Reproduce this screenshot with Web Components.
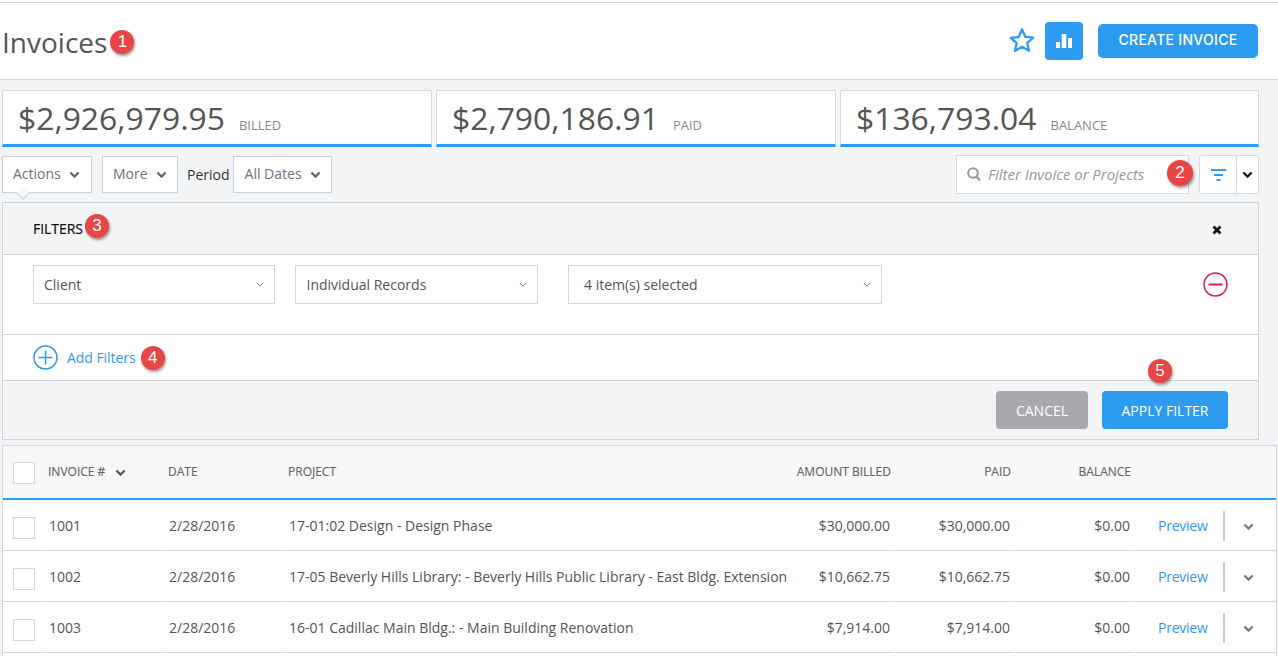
<!DOCTYPE html>
<html lang="en"><head><meta charset="utf-8"><title>Invoices</title>
<style>
html,body{margin:0;padding:0;height:656px;overflow:hidden;background:#f3f4f6;font-family:"Open Sans",sans-serif;font-size:14px;color:#555}
</style></head><body>
<inv-header></inv-header>
<inv-stats></inv-stats>
<inv-toolbar></inv-toolbar>
<filter-panel></filter-panel>
<inv-table></inv-table>
<script>
const chev=(w,h,c,sw)=>`<svg width="${w}" height="${h}" viewBox="0 0 ${w} ${h}" style="display:block;flex:none"><path d="M${sw/2+.3} ${sw/2+.3}L${w/2} ${h-sw/2-.3}L${w-sw/2-.3} ${sw/2+.3}" fill="none" stroke="${c}" stroke-width="${sw}"/></svg>`;
function def(name,css,html){
  customElements.define(name,class extends HTMLElement{
    constructor(){super();const s=this.attachShadow({mode:'open'});
      s.innerHTML=`<style>${css}</style>`+(typeof html==='function'?html(this):html);}
  });
}
def('num-badge',`:host{display:inline-flex;align-items:center;justify-content:center;width:24px;height:24px;border-radius:50%;background:#e84545;color:#fff;font:17px/24px "Liberation Sans",sans-serif;box-shadow:1px 2px 3px rgba(0,0,0,.4);flex:none}`,`<slot></slot>`);

def('inv-header',`
:host{display:block;background:#fff;padding-top:2px}
.bar{display:flex;align-items:center;height:76px;border-top:1px solid #d3d9e1;border-bottom:1px solid #d3d9e1;padding:0 20px 0 2px}
h1{margin:0;font:400 28px/38px "Open Sans",sans-serif;color:#555;margin-top:1px}
num-badge{margin-left:3px;margin-top:2px}
.r{margin-left:auto;display:flex;align-items:center}
.star{display:block;margin-top:-2px}
.chart{width:38px;height:38px;margin-left:10px;background:#2d9bf0;border-radius:4px;display:flex;align-items:center;justify-content:center;margin-top:-1px}
.create{margin-left:15px;width:160px;height:34px;box-sizing:border-box;padding-bottom:2px;background:#2d9bf0;border-radius:5px;color:#fff;display:flex;align-items:center;justify-content:center;font:500 14px/30px Inter,sans-serif;letter-spacing:.3px}
`,`<div class="bar"><h1>Invoices</h1><num-badge>1</num-badge>
<div class="r">
<svg class="star" width="26" height="26" viewBox="0 0 26 26"><path d="M13 2.300l3.300 7.500 7.900.8-5.900 5.300 1.700 7.800L13 19.800l-7 4.100 1.700-7.800-5.900-5.300 7.900-.8z" fill="none" stroke="#2d9bf0" stroke-width="2.300" stroke-linejoin="round"/></svg>
<div class="chart"><svg width="16" height="14" viewBox="0 0 16 14"><path d="M0 8h4v6H0zM5.700 0h4.600v14H5.700zM12 4h4v10h-4z" fill="#fff"/></svg></div>
<div class="create">CREATE INVOICE</div>
</div></div>`);

def('stat-card',`
:host{display:flex;align-items:baseline;box-sizing:border-box;height:57px;background:#fff;border:1px solid #d3d9e1;border-bottom:3px solid #2d9bf0;padding:0 0 0 15px}
.n{font:400 31.850px/53px "Open Sans",sans-serif;color:#555}
.l{font:400 13px/16px "Open Sans",sans-serif;color:#888;margin-left:14px}
`,h=>`<span class="n">${h.getAttribute('value')}</span><span class="l">${h.getAttribute('label')}</span>`);

def('inv-stats',`
:host{display:flex;gap:4px;padding:0 19px 0 2px;margin-top:10px}
stat-card:nth-of-type(1){width:430px}
stat-card:nth-of-type(2){width:400px}
stat-card:nth-of-type(3){flex:1}
`,`<stat-card value="$2,926,979.95" label="BILLED"></stat-card><stat-card value="$2,790,186.91" label="PAID"></stat-card><stat-card value="$136,793.04" label="BALANCE"></stat-card>`);

def('drop-btn',`
:host{display:inline-flex;align-items:center;box-sizing:border-box;height:37px;background:#fff;border:1px solid #c5d3de;padding-left:10px;color:#6b7280;position:relative;line-height:34px}
span{margin-top:-1px}
svg{margin-left:8px}
:host([notch])::after{content:"";position:absolute;left:15px;top:31px;width:9px;height:9px;background:#f7f8fa;border-right:1px solid #c5d3de;border-bottom:1px solid #c5d3de;transform:rotate(45deg) scale(.95);z-index:2}
`,h=>`<span><slot></slot></span>${chev(11,7,'#666',2.2)}`);

def('inv-toolbar',`
:host{display:flex;align-items:center;height:39px;margin:8px 19px 8px 2px}
drop-btn:nth-of-type(1){width:90px}
drop-btn:nth-of-type(2){width:76px;margin-left:10px}
drop-btn:nth-of-type(3){width:99px;padding-left:11px}
.p{margin:-1px 3px 0 9px;color:#333}
.s{position:relative;margin-left:auto;width:233px;height:39px;box-sizing:border-box;background:#fff;border:1px solid #d3dbe2;display:flex;align-items:center;padding-left:10px}
.s i{margin:-2px 0 0 7px;font-style:italic;color:#999;font-size:15px;letter-spacing:-.05px;white-space:nowrap}
num-badge{position:absolute;left:210px;top:4px;width:26px;height:26px}
.f{display:flex;margin-left:10px;width:60px;height:39px;box-sizing:border-box;background:#fff;border:1px solid #d3dbe2;border-radius:3px}
.f div{display:flex;align-items:center;justify-content:center}
.f div:first-child{width:36px;border-right:1px solid #d3dbe2}
.f div:last-child{flex:1}
`,`<drop-btn notch>Actions</drop-btn><drop-btn>More</drop-btn><span class="p">Period</span><drop-btn>All Dates</drop-btn>
<div class="s"><svg width="14" height="15" viewBox="0 0 14 15" style="flex:none"><circle cx="6" cy="6" r="4.800" fill="none" stroke="#999" stroke-width="2"/><path d="M9.500 9.500L13 13.500" stroke="#999" stroke-width="2.400"/></svg><i>Filter Invoice or Projects</i><num-badge>2</num-badge></div>
<div class="f"><div><svg width="15" height="12" viewBox="0 0 15 12"><path d="M0 1h15M3 6h9M5.500 11h4" stroke="#2d9bf0" stroke-width="2"/></svg></div><div>${chev(11,7,'#111',2.2)}</div></div>`);

def('filter-select',`
:host{display:flex;align-items:center;justify-content:space-between;box-sizing:border-box;height:39px;background:#fff;border:1px solid #d3d6db;padding:0 10px 0 10px;color:#555}
span{margin-top:-1px}
`,`<span><slot></slot></span>${chev(8,5,'#777',1)}`);

def('filter-panel',`
:host{display:block;position:relative;box-sizing:border-box;height:238px;margin:0 19px 0 2px;border:1px solid #d0d3d8;background:#f3f4f6}
.h{display:flex;align-items:center;height:51px;padding:0 36px 0 30px;border-bottom:1px solid #d0d3d8;color:#111}
.h b{font-weight:400;letter-spacing:-.05px;margin-top:-1px;-webkit-text-stroke:.2px #111}
.h num-badge{margin-left:2px;margin-top:-5px}
.h svg{margin-left:auto;margin-top:3px}
.c{display:flex;align-items:flex-start;background:#fff;box-sizing:border-box;padding:10px 30px 0;border-bottom:1px solid #d0d3d8;height:80px}
filter-select:nth-child(1){width:242px}
filter-select:nth-child(2){width:243px;margin-left:20px;padding-left:10.500px}
filter-select:nth-child(3){width:314px;margin-left:30px;padding-left:15px}
.c svg{margin-left:auto;margin-top:7px}
.a{display:flex;align-items:center;background:#fff;height:45px;padding:0 30px;border-bottom:1px solid #d0d3d8;color:#2d9bf0}
.a span{margin-left:9px;letter-spacing:-.05px}
.a num-badge{margin-left:5px}
.b{display:flex;justify-content:flex-end;align-items:center;gap:14px;height:58px;padding:0 30px 0 0}
.b div{height:38px;border-radius:4px;color:#fff;display:flex;align-items:center;justify-content:center}
.x{width:92px;background:#a7a9ae}.y{width:126px;background:#2d9bf0}
.n5{position:absolute;left:1145px;top:156px}
`,`<div class="h"><b>FILTERS</b><num-badge>3</num-badge><svg width="10" height="10" viewBox="0 0 10 10"><path d="M1.500 1.500l7 7M8.500 1.500l-7 7" stroke="#111" stroke-width="2.800"/></svg></div>
<div class="c"><filter-select>Client</filter-select><filter-select>Individual Records</filter-select><filter-select>4 item(s) selected</filter-select>
<svg width="25" height="25" viewBox="0 0 25 25"><circle cx="12.500" cy="12.500" r="11.500" fill="none" stroke="#e8175d" stroke-width="1.500"/><path d="M5.500 12.500h14" stroke="#e8175d" stroke-width="2"/></svg></div>
<div class="a"><svg width="25" height="25" viewBox="0 0 25 25" style="flex:none"><circle cx="12.500" cy="12.500" r="11.500" fill="none" stroke="#2d9bf0" stroke-width="1.500"/><path d="M5.500 12.500h14M12.500 5.500v14" stroke="#2d9bf0" stroke-width="1.500"/></svg><span>Add Filters</span><num-badge>4</num-badge></div>
<div class="b"><div class="x">CANCEL</div><div class="y">APPLY FILTER</div></div>
<num-badge class="n5">5</num-badge>`);

const GRID=`display:grid;grid-template-columns:40px 119px 119px 506px 104px 119px 119px 1fr;column-gap:1px`;
def('inv-row',`
:host{display:block;height:51px;background:#fff}
.g{${GRID};height:51px;box-sizing:border-box}
.g>div{display:flex;align-items:center;border-bottom:1px solid #d3d9e1;white-space:nowrap;color:#555;height:51px;box-sizing:border-box;padding-top:1px}
.cb{padding-left:10px}
.cb i{display:block;width:22px;height:22px;box-sizing:border-box;border:1px solid #d3d9e1;background:#fff;margin-top:5px}
.t{padding-left:5px}
.m{justify-content:flex-end;padding-right:5px}
.g>.w{margin-left:-1px}
.g>.a{color:#2d9bf0;padding-left:22px}
.a u{text-decoration:none;width:51px;letter-spacing:-.25px}
.a s{display:block;width:2px;height:30px;background:#ccc;margin:1px 0 0 14px;text-decoration:none}
.a svg{margin:1px 0 0 17.500px}
`,h=>{const v=k=>h.getAttribute(k);return `<div class="g"><div class="cb"><i></i></div><div class="t">${v('n')}</div><div class="t">2/28/2016</div><div class="t">${v('p')}</div><div class="m w">${v('b')}</div><div class="m">${v('b')}</div><div class="m">$0.00</div><div class="a"><u>Preview</u><s></s>${chev(11,7,'#777',2.2)}</div></div>`});

def('inv-table',`
:host{display:block;margin:5px 1px 0 2px;border:1px solid #d3d9e1;border-bottom:0;background:#fff;height:211px;box-sizing:border-box;overflow:hidden}
.h{${GRID};height:52px;background:#f8f8f9;border-bottom:2px solid #2d9bf0}
.h>div{display:flex;align-items:center;font-size:12px;color:#666;white-space:nowrap;padding-bottom:1px;-webkit-text-stroke:.15px #666}
.cb{padding-left:10px}
.cb i{display:block;width:22px;height:22px;box-sizing:border-box;border:1px solid #d3d9e1;background:#fff;margin-top:3px}
.t{padding-left:4px}
.m{justify-content:flex-end;padding-right:4px}
.t svg{margin-left:10px;margin-top:2px}
`,`<div class="h"><div class="cb"><i></i></div><div class="t">INVOICE #${chev(11,7,'#555',2.2)}</div><div class="t">DATE</div><div class="t">PROJECT</div><div class="m">AMOUNT BILLED</div><div class="m">PAID</div><div class="m">BALANCE</div><div></div></div>
<inv-row n="1001" p="17-01:02 Design - Design Phase" b="$30,000.00"></inv-row>
<inv-row n="1002" p="17-05 Beverly Hills Library: - Beverly Hills Public Library - East Bldg. Extension" b="$10,662.75"></inv-row>
<inv-row n="1003" p="16-01 Cadillac Main Bldg.: - Main Building Renovation" b="$7,914.00"></inv-row>`);
</script>
</body></html>
